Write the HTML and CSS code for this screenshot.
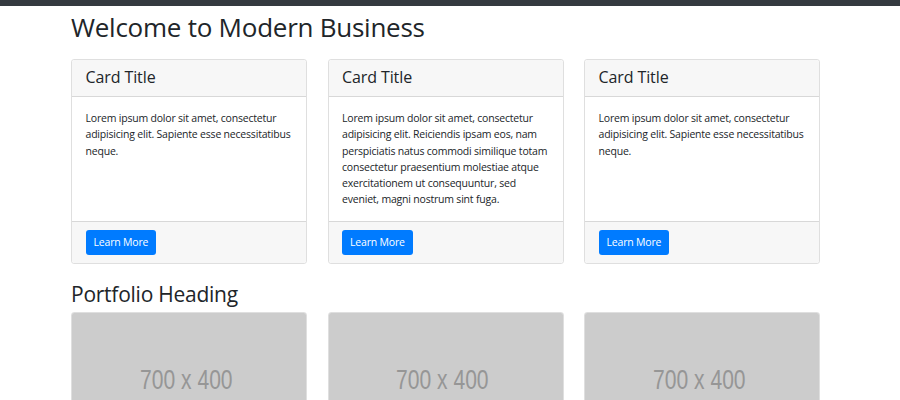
FILE: index.html
```html
<!DOCTYPE html>
<html lang="en">
<head>
<meta charset="utf-8">
<title>Modern Business</title>
<link rel="stylesheet" href="styles.css">
</head>
<body>
<div class="navbar"></div>
<main class="container">
  <h1 class="page-title">Welcome to Modern Business</h1>
  <section class="card-row">
    <article class="card">
      <h4 class="card-header">Card Title</h4>
      <div class="card-body">
        <p>Lorem ipsum dolor sit amet, consectetur adipisicing elit. Sapiente esse necessitatibus neque.</p>
      </div>
      <div class="card-footer"><a class="btn" href="#">Learn More</a></div>
    </article>
    <article class="card">
      <h4 class="card-header">Card Title</h4>
      <div class="card-body">
        <p>Lorem ipsum dolor sit amet, consectetur adipisicing elit. Reiciendis ipsam eos, nam perspiciatis natus commodi similique totam consectetur praesentium molestiae atque exercitationem ut consequuntur, sed eveniet, magni nostrum sint fuga.</p>
      </div>
      <div class="card-footer"><a class="btn" href="#">Learn More</a></div>
    </article>
    <article class="card">
      <h4 class="card-header">Card Title</h4>
      <div class="card-body">
        <p>Lorem ipsum dolor sit amet, consectetur adipisicing elit. Sapiente esse necessitatibus neque.</p>
      </div>
      <div class="card-footer"><a class="btn" href="#">Learn More</a></div>
    </article>
  </section>
  <h2 class="section-title">Portfolio Heading</h2>
  <section class="portfolio-row">
    <div class="pcard"><div class="placeholder"><span>700 x 400</span></div></div>
    <div class="pcard"><div class="placeholder"><span>700 x 400</span></div></div>
    <div class="pcard"><div class="placeholder"><span>700 x 400</span></div></div>
  </section>
</main>
</body>
</html>
```

FILE: styles.css
```css
* { box-sizing: border-box; }
html, body { margin: 0; padding: 0; background: #fff; }
body {
  font-family: "Open Sans", "Noto Sans", sans-serif;
  color: #212529;
  font-size: 10.5px;
  line-height: 16.2px;
  letter-spacing: -0.2px;
}
.navbar {
  height: 6px;
  background: #343a40;
}
.container {
  width: 749px;
  margin-left: 71px;
}
.page-title {
  font-size: 26px;
  font-weight: 400;
  line-height: 32.4px;
  letter-spacing: -0.25px;
  margin: 5px 0 15.6px;
}
.card-row {
  display: grid;
  grid-template-columns: repeat(3, 1fr);
  column-gap: 20.5px;
}
.card {
  display: flex;
  flex-direction: column;
  border: 1px solid rgba(0,0,0,.125);
  border-radius: 3px;
  overflow: hidden;
}
.card-header {
  margin: 0;
  padding: 8.1px 13.5px;
  background: #f7f7f7;
  border-bottom: 1px solid rgba(0,0,0,.125);
  font-size: 16px;
  font-weight: 400;
  line-height: 19.4px;
  letter-spacing: -0.1px;
}
.card-body {
  flex: 1;
  padding: 13.5px;
}
.card-body p { margin: 0; }
.card-footer {
  padding: 8.1px 13.5px;
  background: #f7f7f7;
  border-top: 1px solid rgba(0,0,0,.125);
}
.btn {
  display: inline-block;
  background: #007bff;
  color: #fff;
  text-decoration: none;
  border-radius: 3px;
  padding: 4.4px 8.1px;
  font-size: 10.5px;
  line-height: 16.2px;
}
.section-title {
  font-size: 21px;
  font-weight: 400;
  line-height: 26px;
  letter-spacing: -0.25px;
  margin: 17px 0 5px;
}
.portfolio-row {
  display: grid;
  grid-template-columns: repeat(3, 1fr);
  column-gap: 20.5px;
}
.pcard {
  border: 1px solid rgba(0,0,0,.125);
  border-radius: 3px;
  overflow: hidden;
}
.placeholder {
  aspect-ratio: 700 / 400;
  background: #ccc;
  display: flex;
  align-items: center;
  justify-content: center;
}
.placeholder span {
  font-family: "Liberation Sans", Arial, sans-serif;
  font-size: 27px;
  letter-spacing: 0;
  color: #969696;
  transform: scaleX(0.78);
  margin-left: -6px;
}
```
